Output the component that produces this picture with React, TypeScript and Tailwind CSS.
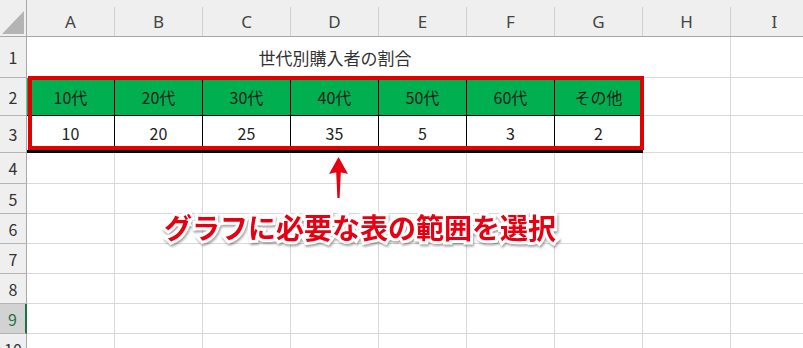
import React from 'react';

const cols = ['A', 'B', 'C', 'D', 'E', 'F', 'G', 'H', 'I'];
const ages = ['10代', '20代', '30代', '40代', '50代', '60代', 'その他'];
const values = ['10', '20', '25', '35', '5', '3', '2'];
const rowHeights = ['h-[41px]', 'h-[38px]', 'h-[37px]', 'h-[31px]', 'h-[30px]', 'h-[30px]', 'h-[30px]', 'h-[30px]', 'h-[30px]', 'h-[30px]'];

const RowHeader: React.FC<{ n: number; selected?: boolean }> = ({ n, selected }) => (
  <div
    className={
      selected
        ? 'flex items-center justify-center bg-[#d2d2d2] text-[#217346] border-b border-[#b4b4b4] border-r-2 border-r-[#217346]'
        : 'flex items-center justify-center bg-[#efefef] text-[#333] border-b border-[#b4b4b4] border-r border-r-[#a8a8a8]'
    }
  >
    {n}
  </div>
);

const App: React.FC = () => {
  return (
    <div className="relative w-[803px] h-[348px] overflow-hidden bg-white font-['Noto_Sans_CJK_JP','Noto_Sans',sans-serif] text-[16px] leading-none">
      <div className="grid grid-cols-[27px_repeat(9,88px)] grid-rows-[37px_41px_38px_37px_31px_repeat(6,30px)]">
        {/* column headers */}
        <div className="relative bg-[#efefef] border-b border-[#a8a8a8] border-r border-r-[#a8a8a8]">
          <svg className="absolute left-[2px] top-[11px]" width="22" height="23" viewBox="0 0 22 23">
            <polygon points="22,0 22,23 0,23" fill="#b4b4b4" />
          </svg>
        </div>
        {cols.map((c) => (
          <div key={c} className="bg-[#efefef] border-b border-[#a8a8a8] flex">
            <div className="mt-[7px] flex-1 border-r border-[#d0d0d0] flex items-center justify-center text-[#444] text-[17px] font-['Noto_Sans',sans-serif]">
              {c}
            </div>
          </div>
        ))}

        {/* row 1 */}
        <RowHeader n={1} />
        <div className="col-span-7 border-b border-[#d9d9d9] flex items-center justify-center text-[17px] text-[#333]">
          世代別購入者の割合
        </div>
        <div className="border-b border-r border-[#d9d9d9]" />
        <div className="border-b border-r border-[#d9d9d9]" />

        {/* row 2 */}
        <RowHeader n={2} />
        {ages.map((a) => (
          <div key={a} className="bg-[#00b050] border-r border-b border-black flex items-center justify-center text-[#1b1b1b]">
            {a}
          </div>
        ))}
        <div className="border-b border-r border-[#d9d9d9]" />
        <div className="border-b border-r border-[#d9d9d9]" />

        {/* row 3 */}
        <RowHeader n={3} />
        {values.map((v) => (
          <div key={v} className="border-r border-b-[3px] border-black flex items-center justify-center text-[#222]">
            {v}
          </div>
        ))}
        <div className="border-b border-r border-[#d9d9d9]" />
        <div className="border-b border-r border-[#d9d9d9]" />

        {/* rows 4-10 */}
        {[4, 5, 6, 7, 8, 9, 10].map((n) => (
          <React.Fragment key={n}>
            <RowHeader n={n} selected={n === 9} />
            {cols.map((c) => (
              <div key={c} className="border-b border-r border-[#d9d9d9]" />
            ))}
          </React.Fragment>
        ))}
      </div>

      {/* selection frame */}
      <div className="absolute left-[28px] top-[76px] w-[616px] h-[74px] border-4 border-[#e00000]" />

      {/* arrow */}
      <svg className="absolute left-[329px] top-[157px]" width="19" height="42" viewBox="0 0 19 42">
        <path d="M9.5 0 L19 17 Q15 15.5 11.8 15.5 L10.6 41 L8.4 41 L7.2 15.5 Q4 15.5 0 17 Z" fill="#e60012" />
      </svg>

      {/* annotation */}
      <div className="absolute left-[164px] top-[213px] text-[28px] font-bold leading-none text-[#e60012] [-webkit-text-stroke:6px_white] [paint-order:stroke_fill] [filter:drop-shadow(1px_2px_1px_rgba(0,0,0,0.35))] whitespace-nowrap">
        グラフに必要な表の範囲を選択
      </div>
    </div>
  );
};

export default App;
